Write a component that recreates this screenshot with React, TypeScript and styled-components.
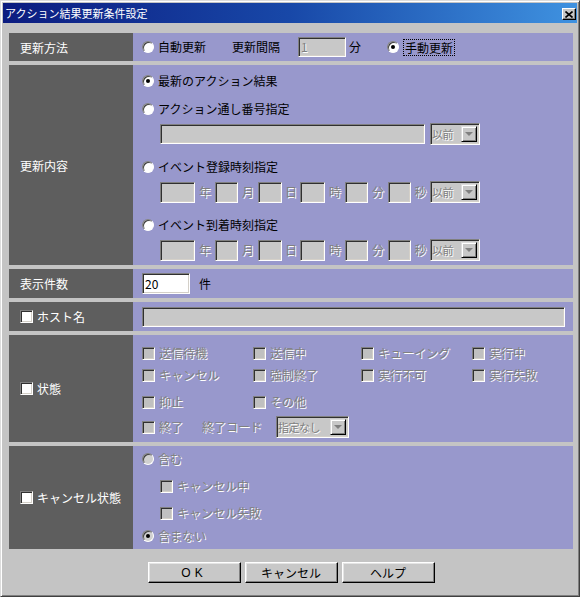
import styled, { createGlobalStyle } from "styled-components";

const GlobalStyle = createGlobalStyle`
  html, body {
    margin: 0;
    padding: 0;
    background: #ffffff;
  }
  body {
    font-family: "Noto Sans CJK JP", "Liberation Sans", sans-serif;
    font-size: 12px;
    color: #000000;
  }
`;

const Window = styled.div`
  width: 580px;
  height: 597px;
  box-sizing: border-box;
  background: #c4c4c4;
  border: 1px solid;
  border-color: #dcdcdc #404040 #404040 #dcdcdc;
  box-shadow: inset 1px 1px 0 #ffffff, inset -1px -1px 0 #808080;
  padding: 2px;
  display: flex;
  flex-direction: column;
`;

const TitleBar = styled.div`
  height: 20px;
  background: linear-gradient(to right, #0c1c80, #1848a8 50%, #3f92e0);
  display: flex;
  align-items: center;
  justify-content: space-between;
  padding: 0 1px 0 2px;
`;

const TitleLabel = styled.span`
  color: #ffffff;
  font-size: 11px;
  line-height: 1;
`;

const CloseButton = styled.span`
  width: 14px;
  height: 12px;
  box-sizing: border-box;
  margin-top: 2px;
  background: #c8c8c8;
  border: 1px solid;
  border-color: #ffffff #000000 #000000 #ffffff;
  box-shadow: inset -1px -1px 0 #808080;
  display: flex;
  align-items: center;
  justify-content: center;
`;

const Body = styled.div`
  padding: 10px 4px 0 6px;
  display: flex;
  flex-direction: column;
`;

const Table = styled.div`
  display: flex;
  flex-direction: column;
  gap: 4px;
`;

const Row = styled.div<{ $h: number }>`
  display: grid;
  grid-template-columns: 124px 1fr;
  height: ${({ $h }) => $h}px;
`;

const Label = styled.div`
  background: #5e5e5e;
  color: #ffffff;
  display: flex;
  align-items: center;
  gap: 4px;
  padding-left: 11px;
`;

const Cell = styled.div<{ $pt?: number; $center?: boolean }>`
  background: #9898cc;
  display: flex;
  flex-direction: column;
  justify-content: ${({ $center }) => ($center ? "center" : "flex-start")};
  padding: ${({ $pt = 0 }) => $pt}px 0 0 9px;
`;

const Line = styled.div<{ $mt?: number; $indent?: number }>`
  display: flex;
  align-items: center;
  height: 22px;
  margin-top: ${({ $mt = 0 }) => $mt}px;
  padding-left: ${({ $indent = 0 }) => $indent}px;
`;

const StatusLine = styled.div<{ $mt?: number }>`
  display: grid;
  grid-template-columns: 111px 108px 111px 1fr;
  align-items: center;
  height: 22px;
  margin-top: ${({ $mt = 0 }) => $mt}px;
`;

const Option = styled.span<{ $ml?: number; $gap?: number }>`
  display: inline-flex;
  align-items: center;
  gap: ${({ $gap = 4 }) => $gap}px;
  margin-left: ${({ $ml = 0 }) => $ml}px;
`;

const Text = styled.span<{ $disabled?: boolean; $ml?: number }>`
  white-space: nowrap;
  line-height: 14px;
  margin-left: ${({ $ml = 0 }) => $ml}px;
  color: ${({ $disabled }) => ($disabled ? "#808080" : "inherit")};
  text-shadow: ${({ $disabled }) => ($disabled ? "1px 1px 0 #ffffff" : "none")};
`;

const Unit = styled(Text)<{ $w: number }>`
  width: ${({ $w }) => $w}px;
  text-align: center;
`;

const Focus = styled.span`
  border: 1px dotted #000000;
  padding: 1px 1px 0;
  line-height: 14px;
`;

const Radio = styled.span<{ $checked?: boolean; $disabled?: boolean }>`
  position: relative;
  width: 12px;
  height: 12px;
  box-sizing: border-box;
  flex-shrink: 0;
  border-radius: 50%;
  border: 1px solid;
  border-color: #808080 #ffffff #ffffff #808080;
  box-shadow: inset 1px 1px 0 #404040;
  background: ${({ $disabled }) => ($disabled ? "#d0d0d0" : "#ffffff")};
  &::after {
    content: "";
    display: ${({ $checked }) => ($checked ? "block" : "none")};
    position: absolute;
    left: 3px;
    top: 3px;
    width: 4px;
    height: 4px;
    border-radius: 50%;
    background: #000000;
  }
`;

const Check = styled.span<{ $disabled?: boolean }>`
  width: 13px;
  height: 13px;
  box-sizing: border-box;
  flex-shrink: 0;
  border: 1px solid;
  border-color: #808080 #ffffff #ffffff #808080;
  box-shadow: inset 1px 1px 0 #303030, inset -1px -1px 0 #d4d0c8;
  background: ${({ $disabled }) => ($disabled ? "#c0c0c0" : "#ffffff")};
`;

const Field = styled.span<{ $w: number; $h?: number; $white?: boolean; $ml?: number }>`
  display: flex;
  align-items: center;
  width: ${({ $w }) => $w}px;
  height: ${({ $h = 20 }) => $h}px;
  box-sizing: border-box;
  flex-shrink: 0;
  margin-left: ${({ $ml = 0 }) => $ml}px;
  padding-left: 2px;
  border: 1px solid;
  border-color: #808080 #ffffff #ffffff #808080;
  box-shadow: inset 1px 1px 0 #303030, inset -1px -1px 0 #d4d0c8;
  background: ${({ $white }) => ($white ? "#ffffff" : "#c8c8c8")};
`;

const SelectBox = styled.span<{ $w: number; $ml?: number }>`
  display: flex;
  align-items: center;
  width: ${({ $w }) => $w}px;
  height: 22px;
  box-sizing: border-box;
  flex-shrink: 0;
  margin-left: ${({ $ml = 0 }) => $ml}px;
  padding: 2px 2px 2px 1px;
  border: 1px solid;
  border-color: #808080 #ffffff #ffffff #808080;
  box-shadow: inset 1px 1px 0 #303030, inset -1px -1px 0 #d4d0c8;
  background: #c8c8c8;
`;

const SelectText = styled(Text)`
  flex: 1;
  font-size: 11px;
  letter-spacing: -0.5px;
`;

const ArrowButton = styled.span`
  width: 16px;
  height: 16px;
  box-sizing: border-box;
  flex-shrink: 0;
  background: #c8c8c8;
  border: 1px solid;
  border-color: #dcdcdc #000000 #000000 #dcdcdc;
  box-shadow: inset 1px 1px 0 #ffffff, inset -1px -1px 0 #808080;
  display: flex;
  align-items: center;
  justify-content: center;
  &::after {
    content: "";
    border-left: 4px solid transparent;
    border-right: 4px solid transparent;
    border-top: 4px solid #808080;
  }
`;

const Buttons = styled.div`
  display: flex;
  justify-content: center;
  gap: 4px;
  margin-top: 13px;
`;

const Button = styled.span<{ $spaced?: boolean }>`
  width: 93px;
  height: 21px;
  box-sizing: border-box;
  background: #c8c8c8;
  border: 1px solid;
  border-color: #ffffff #000000 #000000 #ffffff;
  box-shadow: inset -1px -1px 0 #808080, inset 1px 1px 0 #e4e4e4;
  display: flex;
  align-items: center;
  justify-content: center;
  letter-spacing: ${({ $spaced }) => ($spaced ? "4px" : "0")};
  font-family: ${({ $spaced }) =>
    $spaced ? '"Liberation Sans", sans-serif' : "inherit"};
`;

function Select({ width, text, ml }: { width: number; text: string; ml?: number }) {
  return (
    <SelectBox $w={width} $ml={ml}>
      <SelectText $disabled>{text}</SelectText>
      <ArrowButton />
    </SelectBox>
  );
}

const dateParts: [number, string, number][] = [
  [35, "年", 20],
  [23, "月", 20],
  [24, "日", 18],
  [25, "時", 20],
  [23, "分", 20],
  [23, "秒", 19],
];

function DateLine({ mt }: { mt: number }) {
  return (
    <Line $mt={mt} $indent={18}>
      {dateParts.map(([w, unit, uw]) => (
        <Option key={unit} $gap={0}>
          <Field $w={w} $h={21} />
          <Unit $w={uw} $disabled>
            {unit}
          </Unit>
        </Option>
      ))}
      <Select width={50} text="以前" />
    </Line>
  );
}

function StatusItem({ text }: { text: string }) {
  return (
    <Option>
      <Check $disabled />
      <Text $disabled>{text}</Text>
    </Option>
  );
}

export default function App() {
  return (
    <>
      <GlobalStyle />
      <Window>
        <TitleBar>
          <TitleLabel>アクション結果更新条件設定</TitleLabel>
          <CloseButton>
            <svg width="8" height="7" viewBox="0 0 8 7">
              <path d="M0.5 0.5 L7.5 6.5 M7.5 0.5 L0.5 6.5" stroke="#000" strokeWidth="1.6" />
            </svg>
          </CloseButton>
        </TitleBar>
        <Body>
          <Table>
            <Row $h={28}>
              <Label>更新方法</Label>
              <Cell $center>
                <Line>
                  <Option>
                    <Radio />
                    <Text>自動更新</Text>
                  </Option>
                  <Text $ml={26}>更新間隔</Text>
                  <Field $w={48} $ml={18}>
                    <Text $disabled>1</Text>
                  </Field>
                  <Text $ml={3}>分</Text>
                  <Option $ml={26}>
                    <Radio $checked />
                    <Focus>手動更新</Focus>
                  </Option>
                </Line>
              </Cell>
            </Row>
            <Row $h={200}>
              <Label>更新内容</Label>
              <Cell $pt={5}>
                <Line>
                  <Option>
                    <Radio $checked />
                    <Text>最新のアクション結果</Text>
                  </Option>
                </Line>
                <Line $mt={6}>
                  <Option>
                    <Radio />
                    <Text>アクション通し番号指定</Text>
                  </Option>
                </Line>
                <Line $mt={3} $indent={18}>
                  <Field $w={265} />
                  <Select width={50} text="以前" ml={5} />
                </Line>
                <Line $mt={11}>
                  <Option>
                    <Radio />
                    <Text>イベント登録時刻指定</Text>
                  </Option>
                </Line>
                <DateLine mt={3} />
                <Line $mt={11}>
                  <Option>
                    <Radio />
                    <Text>イベント到着時刻指定</Text>
                  </Option>
                </Line>
                <DateLine mt={3} />
              </Cell>
            </Row>
            <Row $h={29}>
              <Label>表示件数</Label>
              <Cell $center>
                <Line>
                  <Field $w={48} $h={21} $white>
                    20
                  </Field>
                  <Text $ml={9}>件</Text>
                </Line>
              </Cell>
            </Row>
            <Row $h={29}>
              <Label>
                <Check />
                ホスト名
              </Label>
              <Cell $center>
                <Line>
                  <Field $w={423} />
                </Line>
              </Cell>
            </Row>
            <Row $h={107}>
              <Label>
                <Check />
                状態
              </Label>
              <Cell $pt={7}>
                <StatusLine>
                  <StatusItem text="送信待機" />
                  <StatusItem text="送信中" />
                  <StatusItem text="キューイング" />
                  <StatusItem text="実行中" />
                </StatusLine>
                <StatusLine>
                  <StatusItem text="キャンセル" />
                  <StatusItem text="強制終了" />
                  <StatusItem text="実行不可" />
                  <StatusItem text="実行失敗" />
                </StatusLine>
                <StatusLine $mt={5}>
                  <StatusItem text="抑止" />
                  <StatusItem text="その他" />
                </StatusLine>
                <Line $mt={3}>
                  <StatusItem text="終了" />
                  <Text $disabled $ml={19}>
                    終了コード
                  </Text>
                  <Select width={73} text="指定なし" ml={14} />
                </Line>
              </Cell>
            </Row>
            <Row $h={103}>
              <Label>
                <Check />
                キャンセル状態
              </Label>
              <Cell $pt={2}>
                <Line>
                  <Option>
                    <Radio $disabled />
                    <Text $disabled>含む</Text>
                  </Option>
                </Line>
                <Line $mt={5} $indent={18}>
                  <StatusItem text="キャンセル中" />
                </Line>
                <Line $mt={5} $indent={18}>
                  <StatusItem text="キャンセル失敗" />
                </Line>
                <Line $mt={1}>
                  <Option>
                    <Radio $disabled $checked />
                    <Text $disabled>含まない</Text>
                  </Option>
                </Line>
              </Cell>
            </Row>
          </Table>
          <Buttons>
            <Button $spaced>OK</Button>
            <Button>キャンセル</Button>
            <Button>ヘルプ</Button>
          </Buttons>
        </Body>
      </Window>
    </>
  );
}
